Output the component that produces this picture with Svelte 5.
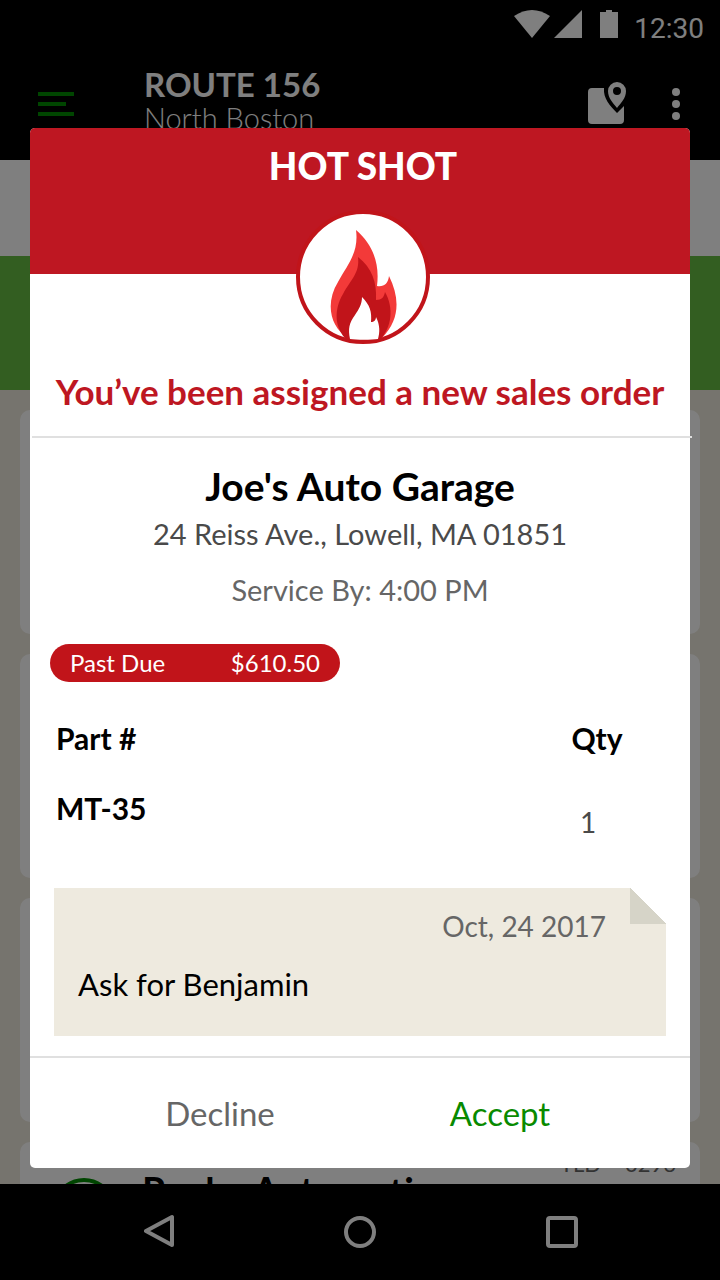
<script>
  const cards = [
    { name: '', code: '' },
    { name: '', code: '' },
    { name: '', code: '' },
    { name: 'Rocky Automotive', code: 'TLD – 0296' }
  ];
  const order = {
    customer: "Joe's Auto Garage",
    address: '24 Reiss Ave., Lowell, MA 01851',
    service: 'Service By: 4:00 PM',
    due: '$610.50',
    parts: [{ number: 'MT-35', qty: 1 }],
    note: { date: 'Oct, 24 2017', text: 'Ask for Benjamin' }
  };
</script>

<div class="screen">
  <div class="status">
    <svg width="104" height="28" viewBox="0 0 104 28" fill="#fff" aria-hidden="true">
      <path d="M0 6Q18-6 36 6L18 28Z" />
      <path d="M68 0V28H40Z" />
      <path d="M92 0h6v2h6v26H86V2h6Z" />
    </svg>
    <span class="time">12:30</span>
  </div>

  <header class="appbar">
    <button class="icon" aria-label="Menu">
      <svg width="36" height="24" viewBox="0 0 36 24" fill="#008a00"><path d="M0 0h36v4H0zM0 10h28v4H0zM0 20h36v4H0z" /></svg>
    </button>
    <div class="route">
      <strong>ROUTE 156</strong>
      <span>North Boston</span>
    </div>
    <button class="icon" aria-label="Map">
      <svg width="40" height="44" viewBox="0 0 40 44" fill="#fff">
        <path d="M4 6H16C15 16 22 24 29 31L36 24V38a4 4 0 0 1-4 4H4a4 4 0 0 1-4-4V10a4 4 0 0 1 4-4Z" />
        <path fill-rule="evenodd" d="M29 0a9 9 0 0 1 9 9c0 7-5 12-9 17c-4-5-9-10-9-17a9 9 0 0 1 9-9Zm0 5a4 4 0 1 0 0 8a4 4 0 0 0 0-8Z" />
      </svg>
    </button>
    <button class="icon" aria-label="More options">
      <svg width="8" height="32" viewBox="0 0 8 32" fill="#fff"><circle cx="4" cy="4" r="4" /><circle cx="4" cy="16" r="4" /><circle cx="4" cy="28" r="4" /></svg>
    </button>
  </header>

  <div class="strip"></div>
  <div class="band"></div>

  <main class="list">
    {#each cards as card}
      <article class="card">
        {#if card.name}
          <span class="ring"></span>
          <h3>{card.name}</h3>
          <span class="code">{card.code}</span>
        {/if}
      </article>
    {/each}
  </main>

  <nav class="system">
    <button class="icon" aria-label="Back">
      <svg width="34" height="36" viewBox="0 0 34 36" fill="none" stroke="#fff" stroke-width="4" stroke-linejoin="round"><path d="M28 3V31L2 17Z" /></svg>
    </button>
    <button class="icon" aria-label="Home">
      <svg width="32" height="32" viewBox="0 0 32 32" fill="none" stroke="#fff" stroke-width="4"><circle cx="16" cy="16" r="14" /></svg>
    </button>
    <button class="icon" aria-label="Recent apps">
      <svg width="32" height="32" viewBox="0 0 32 32" fill="none" stroke="#fff" stroke-width="4"><rect x="2" y="2" width="28" height="28" rx="2" /></svg>
    </button>
  </nav>

  <div class="overlay">
    <section class="dialog" role="dialog" aria-labelledby="dialog-title">
      <div class="banner">
        <h1 id="dialog-title">HOT SHOT</h1>
        <div class="flame">
          <svg width="134" height="134" viewBox="0 0 134 134" aria-hidden="true">
            <circle cx="67" cy="67" r="65" fill="#fff" stroke="#c1141a" stroke-width="4" />
            <path fill="#f33a39" d="M60 20C76 34 84 52 81 76C88 77 92 74 93 66C104 88 104 110 86 128H52C34 117 29 93 42 72C52 54 63 42 60 20Z" />
            <path fill="#c1141a" d="M62 47C76 58 81 72 80 90C86 90 88 87 89 82C98 98 96 117 84 130H51C38 118 38 99 47 84C55 69 64 63 62 47Z" />
            <path fill="#fff" d="M66 87C74 95 76 102 75 112C78 112 80 110 80 107C84 115 84 122 82 129C76 130 60 130 54 129C52 119 53 113 59 105C63 99 66 94 66 87Z" />
          </svg>
        </div>
      </div>

      <p class="intro">You’ve been assigned a new sales order</p>
      <hr class="shifted" />

      <div class="customer">
        <h2>{order.customer}</h2>
        <p class="address">{order.address}</p>
        <p class="service">{order.service}</p>
      </div>

      <div class="due"><span>Past Due</span><span>{order.due}</span></div>

      <table>
        <thead>
          <tr><th>Part #</th><th class="qty">Qty</th></tr>
        </thead>
        <tbody>
          {#each order.parts as part}
            <tr><td class="number">{part.number}</td><td class="qty count">{part.qty}</td></tr>
          {/each}
        </tbody>
      </table>

      <div class="note">
        <time>{order.note.date}</time>
        <p>{order.note.text}</p>
      </div>

      <hr />
      <div class="actions">
        <button class="decline">Decline</button>
        <button class="accept">Accept</button>
      </div>
    </section>
  </div>
</div>

<style>
  :global(body) { margin: 0; background: #000; }
  * { box-sizing: border-box; }
  .screen {
    position: relative;
    display: flex;
    flex-direction: column;
    height: 100vh;
    min-height: 1280px;
    overflow: hidden;
    font-family: Lato, "Liberation Sans", sans-serif;
    background: #ece8dc;
  }
  h1, h2, h3, p { margin: 0; }
  svg { display: block; }
  button { font: inherit; border: 0; background: none; padding: 0; cursor: pointer; }

  .status {
    display: flex;
    justify-content: flex-end;
    gap: 16px;
    height: 48px;
    padding: 10px 16px 0 0;
    background: #000;
    color: #fff;
  }
  .time { font: 28px/38px Roboto, sans-serif; }
  .appbar {
    display: flex;
    align-items: center;
    height: 112px;
    padding: 0 40px 0 38px;
    background: #000;
    color: #fff;
  }
  .route { display: flex; flex-direction: column; flex: 1; margin-left: 70px; padding-bottom: 8px; }
  .route strong { font-size: 33px; line-height: 36px; }
  .route span { font-size: 29px; line-height: 32px; font-weight: 300; }
  .appbar .icon:last-child { margin-left: 44px; }
  .strip { height: 96px; background: #fff; }
  .band { height: 134px; background: #66bd42; }
  .list {
    flex: 1;
    min-height: 0;
    display: flex;
    flex-direction: column;
    gap: 20px;
    padding: 20px 20px 0;
    overflow: hidden;
  }
  .card {
    flex: none;
    display: flex;
    align-items: flex-start;
    height: 224px;
    padding: 8px 24px 0 32px;
    border-radius: 10px;
    background: #fff;
  }
  .ring { width: 64px; height: 64px; margin: 28px 26px 0 0; border: 4px solid #008a00; border-radius: 50%; }
  .card h3 { flex: 1; margin-top: 20px; font-size: 38px; line-height: 40px; white-space: nowrap; }
  .code { font-size: 22px; line-height: 28px; color: #666; }

  .system {
    display: flex;
    align-items: center;
    justify-content: space-between;
    height: 96px;
    padding: 0 142px 0 144px;
    background: #000;
  }
  .system .icon:first-child { margin-right: -4px; }

  .overlay {
    position: absolute;
    inset: 0;
    padding: 128px 30px 0;
    background: rgba(0, 0, 0, 0.5);
  }
  .dialog { border-radius: 5px; background: #fff; }
  .banner {
    display: flex;
    flex-direction: column;
    align-items: center;
    gap: 22px;
    height: 146px;
    padding: 16px 0 0 6px;
    border-radius: 5px 5px 0 0;
    background: #be1722;
    color: #fff;
  }
  h1 { font-size: 37px; line-height: 44px; font-weight: 900; }
  .intro {
    padding: 96px 0 24px;
    font-size: 35px;
    line-height: 42px;
    font-weight: 700;
    text-align: center;
    white-space: nowrap;
    color: #be1722;
  }
  hr { height: 2px; margin: 0; border: 0; background: #e0e0e0; }
  .shifted { margin: 0 -2px 0 2px; }
  .customer { padding-top: 26px; text-align: center; }
  h2 { font-size: 39px; line-height: 44px; }
  .address { margin-top: 8px; font-size: 29px; line-height: 36px; color: #4a4a4a; }
  .service { margin-top: 20px; font-size: 29px; line-height: 36px; color: #666; }
  .due {
    display: flex;
    justify-content: space-between;
    width: 290px;
    margin: 36px 0 0 20px;
    padding: 0 20px;
    border-radius: 19px;
    font-size: 24px;
    line-height: 38px;
    background: #c1141a;
    color: #fff;
  }
  table { width: 100%; margin-top: 34px; border-collapse: collapse; font-size: 30px; line-height: 44px; }
  th, td { padding: 0 0 0 26px; text-align: left; vertical-align: top; }
  .number { padding-top: 26px; font-weight: 700; }
  th.qty, td.qty { width: 186px; padding-left: 0; text-align: center; }
  td.count { padding: 40px 18px 0 0; font-size: 28px; color: #4a4a4a; }
  .note {
    height: 148px;
    margin: 44px 24px 20px;
    padding: 20px 60px 0 24px;
    background:
      linear-gradient(45deg, #d6d4c8 50%, #fff 50%) top right / 36px 36px no-repeat,
      #eeeadf;
  }
  .note time { display: block; text-align: right; font-size: 28px; line-height: 36px; color: #666; }
  .note p { margin-top: 20px; font-size: 31px; line-height: 40px; }
  .actions { display: flex; height: 110px; padding: 0 50px; font-size: 33px; }
  .actions button { flex: 1; }
  .decline { color: #666; }
  .accept { color: #088a00; }
</style>
